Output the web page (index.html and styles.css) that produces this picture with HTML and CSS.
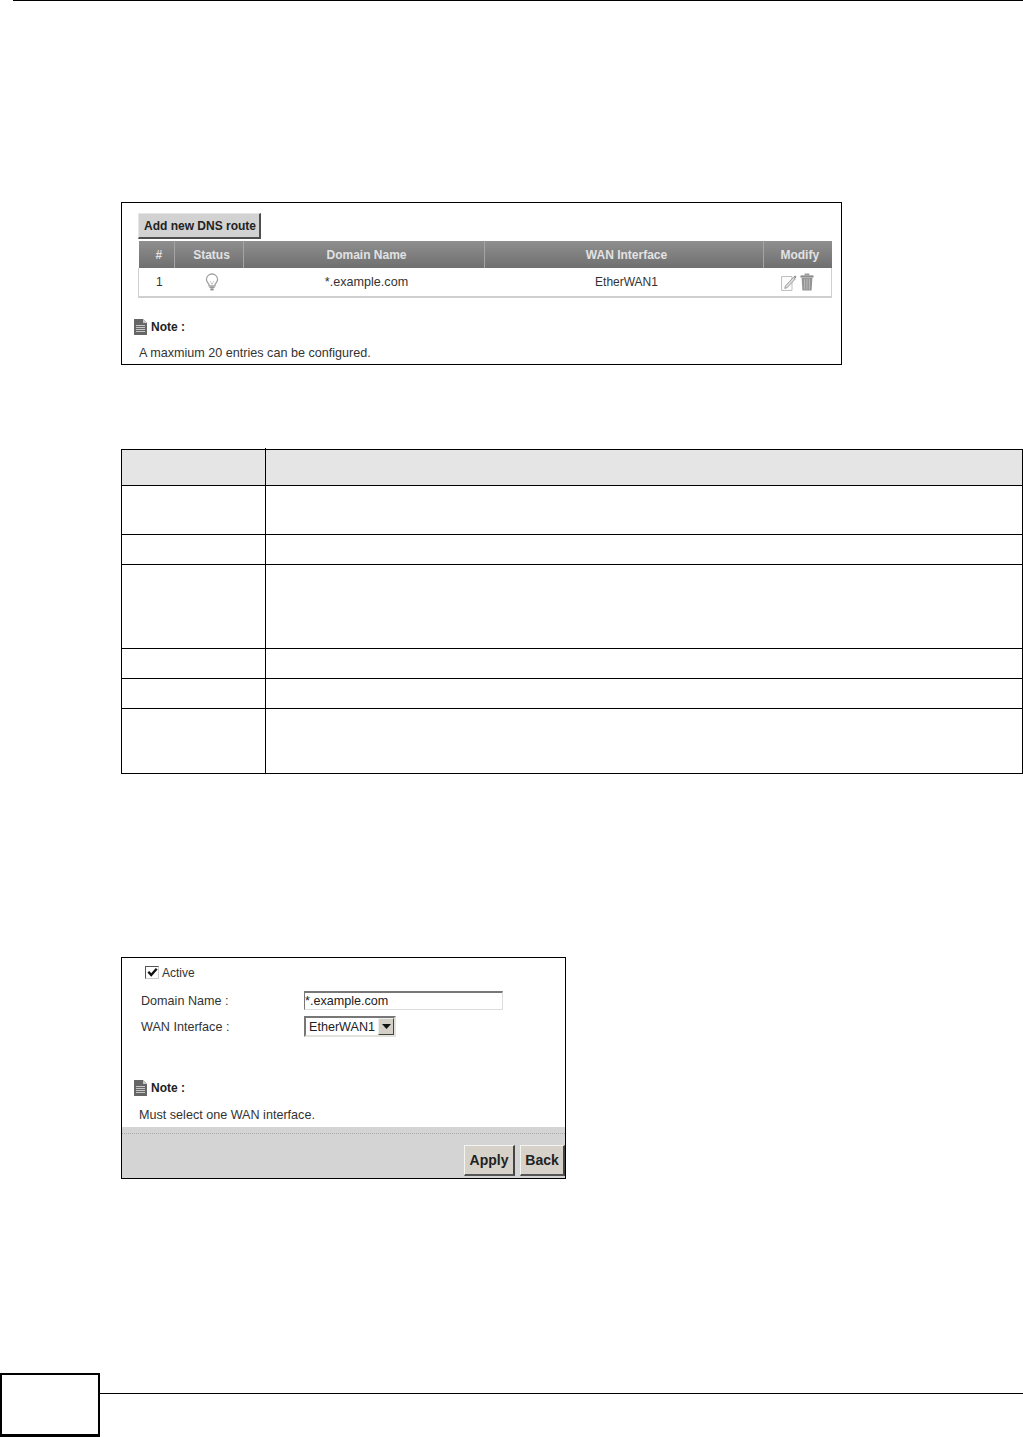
FILE: index.html
```html
<!DOCTYPE html>
<html lang="en">
<head>
<meta charset="utf-8">
<title>DNS route</title>
<link rel="stylesheet" href="styles.css">
</head>
<body>
<div class="top-rule"></div>

<section class="panel panel-routes">
  <button class="btn-add" type="button">Add new DNS route</button>
  <table class="routes">
    <colgroup><col class="c1"><col class="c2"><col class="c3"><col class="c4"><col class="c5"></colgroup>
    <thead>
      <tr><th>#</th><th>Status</th><th>Domain Name</th><th>WAN Interface</th><th>Modify</th></tr>
    </thead>
    <tbody>
      <tr>
        <td>1</td>
        <td>
          <svg class="icon-bulb" width="14" height="18" viewBox="0 0 14 18"><path d="M7 1a5.6 5.6 0 0 0-5.6 5.6c0 2.2 1.8 3.3 2.6 5v1.2h6v-1.2c.8-1.7 2.6-2.8 2.6-5A5.6 5.6 0 0 0 7 1z" fill="#fff" stroke="#a2a2a2" stroke-width="1.3"/><path d="M5.2 8 7 11.5 8.8 8" fill="none" stroke="#cfcfcf"/><path d="M4.4 13.4h5.2v1.6H4.4z" fill="#9a9a9a"/><path d="M5.4 15.4h3.2v2H5.4z" fill="#8a8a8a"/></svg>
        </td>
        <td class="cell-domain">*.example.com</td>
        <td>EtherWAN1</td>
        <td>
          <div class="actions">
            <svg width="16" height="17" viewBox="0 0 16 17"><path d="M.5 2.5h10.5v14H.5z" fill="#fbfbfb" stroke="#c0c0c0"/><path d="M4.4 12 12.4 3.4l1.8 1.6L6.2 13.6l-2.4.8z" fill="#dedede" stroke="#8a8a8a" stroke-width=".8"/><path d="M12.6 3 14 1.4l1.5 1.4-1.1 1.8z" fill="#8a8a8a"/></svg>
            <svg width="14" height="18" viewBox="0 0 14 18"><path d="M.5 2.4h13v2.2H.5z" fill="#8a8a8a"/><path d="M4.6.5h4.8v2H4.6z" fill="#9a9a9a"/><path d="M1.6 5h10.8l-.8 12.6H2.4z" fill="#949494"/><path d="M4.6 6v10.5M7 6v10.5M9.4 6v10.5" stroke="#bdbdbd" stroke-width=".9"/></svg>
          </div>
        </td>
      </tr>
    </tbody>
  </table>
  <div class="note note-routes">
    <svg class="note-icon" width="13" height="16" viewBox="0 0 13 16"><path d="M0 0h9l4 4v12H0z" fill="#666"/><path d="M9 0l4 4H9z" fill="#c8c8c8"/><path d="M2 6.5h9M2 8.5h9M2 10.5h9M2 12.5h9" stroke="#c6c6c6"/></svg>
    <strong>Note :</strong>
  </div>
  <p class="note-text note-text-routes">A maxmium 20 entries can be configured.</p>
</section>

<table class="desc">
  <colgroup><col class="d1"><col></colgroup>
  <tr class="r36"><th class="tick"></th><th></th></tr>
  <tr class="r49"><td></td><td></td></tr>
  <tr class="r30"><td></td><td></td></tr>
  <tr class="r84"><td></td><td></td></tr>
  <tr class="r30"><td></td><td></td></tr>
  <tr class="r30"><td></td><td></td></tr>
  <tr class="r65"><td></td><td></td></tr>
</table>

<section class="panel panel-edit">
  <div class="form-body">
    <div class="active-row">
      <span class="check"><svg width="11" height="11" viewBox="0 0 11 11"><path d="M1.3 4.8 4.2 8 9.7 1.8" fill="none" stroke="#111" stroke-width="2.4"/></svg></span>
      <span class="active-label">Active</span>
    </div>
    <div class="field field-domain">
      <label class="field-label" for="domain">Domain Name :</label>
      <input id="domain" class="text-input" type="text" value="*.example.com">
    </div>
    <div class="field field-wan">
      <span class="field-label">WAN Interface :</span>
      <div class="select">
        <span class="select-value">EtherWAN1</span>
        <span class="select-arrow"><svg width="9" height="5" viewBox="0 0 9 5"><path d="M0 0h9L4.5 5z" fill="#111"/></svg></span>
      </div>
    </div>
    <div class="note note-edit">
      <svg class="note-icon" width="13" height="16" viewBox="0 0 13 16"><path d="M0 0h9l4 4v12H0z" fill="#666"/><path d="M9 0l4 4H9z" fill="#c8c8c8"/><path d="M2 6.5h9M2 8.5h9M2 10.5h9M2 12.5h9" stroke="#c6c6c6"/></svg>
      <strong>Note :</strong>
    </div>
    <p class="note-text note-text-edit">Must select one WAN interface.</p>
  </div>
  <div class="form-footer">
    <button class="btn-form btn-apply" type="button">Apply</button>
    <button class="btn-form" type="button">Back</button>
  </div>
</section>

<footer class="page-footer">
  <div class="page-box"></div>
  <div class="page-line"></div>
</footer>
</body>
</html>
```

FILE: styles.css
```css
* { box-sizing: border-box; }
html, body { margin: 0; padding: 0; }
body {
  width: 1023px;
  height: 1437px;
  overflow: hidden;
  display: flex;
  flex-direction: column;
  background: #fff;
  color: #333;
  font-family: "Liberation Sans", Arial, sans-serif;
  font-size: 12.6px;
}
.top-rule { height: 1px; margin-left: 13px; background: #000; flex: none; }

.panel { border: 1px solid #000; margin-left: 121px; flex: none; background: #fff; }
.panel-routes { width: 721px; height: 163px; margin-top: 201px; padding: 10px 0 0 16px; }
.panel-edit { width: 445px; height: 222px; margin-top: 183px; display: flex; flex-direction: column; }

.btn-add {
  display: block;
  width: 123px;
  height: 26px;
  padding: 0 0 0 2px;
  background: #d2d2d2;
  border: 1px solid #e6e6e6;
  border-right: 2px solid #4e4e4e;
  border-bottom: 2px solid #4e4e4e;
  color: #222;
  font: bold 12px "Liberation Sans", Arial, sans-serif;
}

.routes {
  width: 693px;
  margin-top: 2px;
  table-layout: fixed;
  border-collapse: collapse;
}
.c1 { width: 36px; } .c2 { width: 69px; } .c3 { width: 241px; } .c4 { width: 279px; } .c5 { width: 68px; }
.routes th {
  height: 27px;
  padding: 0 0 0 5px;
  background: linear-gradient(#8f8f8f, #6f6f6f);
  color: #e2e2e2;
  font-weight: bold;
  font-size: 12px;
  border-left: 1px solid #a5a5a5;
}
.routes th:first-child { border-left: 0; }
.routes th:last-child { padding-left: 4px; }
.routes td {
  height: 29px;
  padding: 0 0 0 5px;
  text-align: center;
  background: #fff;
  font-size: 12px;
  border-bottom: 2px solid #d0d0d0;
}
.routes td.cell-domain { font-size: 12.6px; }
.routes td:first-child { border-left: 1px solid #d0d0d0; }
.routes td:last-child { border-right: 1px solid #d0d0d0; padding-left: 0; }
.routes svg { vertical-align: middle; }
.actions { display: flex; justify-content: center; align-items: center; gap: 3px; }

.note { display: flex; align-items: center; gap: 4px; font-size: 12px; color: #222; }
.note-routes { margin: 21px 0 0 -4px; height: 16px; }
.note-edit { margin: 43px 0 0 12px; height: 16px; }
.note-text { margin: 0; color: #333; font-size: 12.6px; line-height: 14px; }
.note-text-routes { margin: 11px 0 0 1px; }
.note-text-edit { margin: 12px 0 0 17px; }

.desc {
  width: 902px;
  margin: 84px 0 0 121px;
  flex: none;
  table-layout: fixed;
  border-collapse: collapse;
}
.d1 { width: 144px; }
.desc th, .desc td { border: 1px solid #000; padding: 0; }
.desc th { background: #e5e5e5; }
.desc .tick { position: relative; }
.desc .tick::after {
  content: "";
  position: absolute;
  top: -2px;
  right: -1px;
  width: 1px;
  height: 2px;
  background: #000;
}
.r36 { height: 36px; } .r49 { height: 49px; } .r30 { height: 30px; } .r84 { height: 84px; } .r65 { height: 65px; }

.form-body { flex: 1; padding-top: 7px; }
.active-row { display: flex; align-items: center; gap: 3px; margin-left: 23px; height: 14px; }
.active-label { position: relative; top: 1px; font-size: 12px; }
.check {
  width: 14px;
  height: 13px;
  display: flex;
  align-items: center;
  justify-content: center;
  background: #fff;
  border: 1px solid;
  border-color: #555 #ccc #ccc #555;
}
.field { display: flex; align-items: center; margin-left: 19px; }
.field-label { width: 163px; flex: none; color: #333; }
.field-domain { margin-top: 12px; height: 19px; }
.field-wan { margin-top: 6px; height: 21px; }
.text-input {
  width: 199px;
  height: 19px;
  padding: 0;
  margin: 0;
  border: 1px solid;
  border-color: #777 #ddd #ddd #777;
  border-top-width: 2px;
  color: #222;
  font: 12.6px "Liberation Sans", Arial, sans-serif;
  background: #fff;
}
.select {
  width: 92px;
  height: 21px;
  display: flex;
  align-items: center;
  justify-content: space-between;
  padding: 0 0 0 3px;
  border: 2px solid;
  border-color: #777 #e4e2dc #e4e2dc #777;
  background: #fff;
  color: #222;
}
.select-arrow {
  width: 16px;
  height: 17px;
  display: flex;
  align-items: center;
  justify-content: center;
  background: #d4d0c8;
  border: 1px solid;
  border-color: #eee #444 #444 #eee;
}

.form-footer {
  height: 51px;
  flex: none;
  background: #d4d4d4;
  position: relative;
  display: flex;
  justify-content: flex-end;
  align-items: flex-start;
  gap: 5px;
  padding-top: 18px;
}
.form-footer::before {
  content: "";
  position: absolute;
  left: 0;
  right: 0;
  top: 6px;
  border-top: 1px dotted #aaa;
}
.btn-form {
  width: 45px;
  height: 31px;
  padding: 0;
  background: #d6d2ca;
  border: 1px solid;
  border-color: #f4f4f0 #444 #555 #f4f4f0;
  border-width: 1px 2px 2px 1px;
  color: #222;
  font: bold 14px "Liberation Sans", Arial, sans-serif;
}
.btn-apply { width: 51px; }

.page-footer { margin-top: auto; height: 64px; flex: none; display: flex; align-items: flex-start; }
.page-box { width: 100px; height: 64px; border: 2px solid #000; border-bottom-width: 3px; flex: none; }
.page-line { flex: 1; height: 1px; margin-top: 20px; background: #000; }
```
